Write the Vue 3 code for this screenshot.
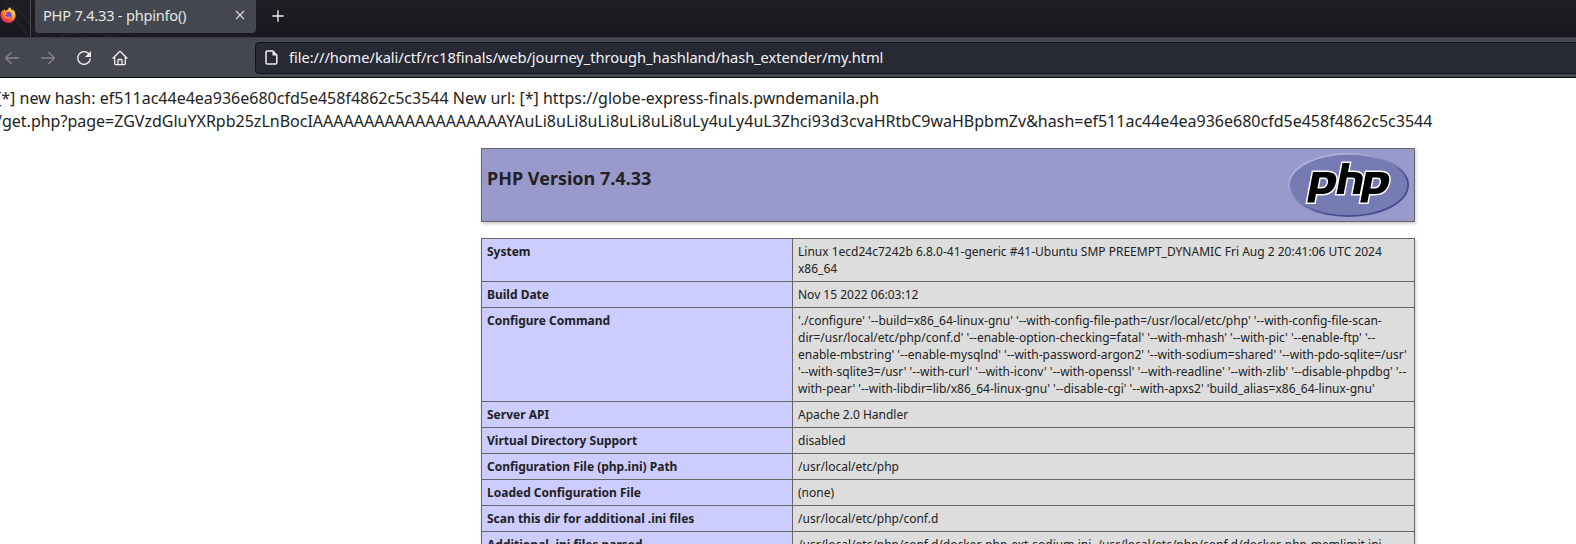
<script setup>
const rows = [
  { name: 'System', lines: ['Linux 1ecd24c7242b 6.8.0-41-generic #41-Ubuntu SMP PREEMPT_DYNAMIC Fri Aug 2 20:41:06 UTC 2024', 'x86_64'] },
  { name: 'Build Date', lines: ['Nov 15 2022 06:03:12'] },
  {
    name: 'Configure Command',
    lines: [
      "'./configure' '--build=x86_64-linux-gnu' '--with-config-file-path=/usr/local/etc/php' '--with-config-file-scan-",
      "dir=/usr/local/etc/php/conf.d' '--enable-option-checking=fatal' '--with-mhash' '--with-pic' '--enable-ftp' '--",
      "enable-mbstring' '--enable-mysqlnd' '--with-password-argon2' '--with-sodium=shared' '--with-pdo-sqlite=/usr'",
      "'--with-sqlite3=/usr' '--with-curl' '--with-iconv' '--with-openssl' '--with-readline' '--with-zlib' '--disable-phpdbg' '--",
      "with-pear' '--with-libdir=lib/x86_64-linux-gnu' '--disable-cgi' '--with-apxs2' 'build_alias=x86_64-linux-gnu'",
    ],
  },
  { name: 'Server API', lines: ['Apache 2.0 Handler'] },
  { name: 'Virtual Directory Support', lines: ['disabled'] },
  { name: 'Configuration File (php.ini) Path', lines: ['/usr/local/etc/php'] },
  { name: 'Loaded Configuration File', lines: ['(none)'] },
  { name: 'Scan this dir for additional .ini files', lines: ['/usr/local/etc/php/conf.d'] },
  { name: 'Additional .ini files parsed', lines: ['/usr/local/etc/php/conf.d/docker-php-ext-sodium.ini, /usr/local/etc/php/conf.d/docker-php-memlimit.ini'] },
]
</script>

<template>
  <div class="window">
    <div class="tabs">
      <div class="pinned">
        <svg width="16" height="16" viewBox="0 0 16 16">
          <defs>
            <linearGradient id="fox" x1="0.85" y1="0" x2="0.2" y2="1">
              <stop offset="0" stop-color="#fff04a" />
              <stop offset="0.4" stop-color="#ffa52b" />
              <stop offset="0.7" stop-color="#ff4a3c" />
              <stop offset="1" stop-color="#e8128a" />
            </linearGradient>
          </defs>
          <path fill="url(#fox)" d="M9.2 0.2c1.8 1 2.4 2.2 2.7 3.2l1-1c1.6 1.5 2.7 3.6 2.7 6a7.5 7.5 0 0 1-15.1.1C.5 6.300 1.200 4.300 2.600 2.900l.5 1.300L4.500 2l.8 1.700c1.100-.2 2-.6 2.600-1.400.5-.6.9-1.300 1.300-2.100z" />
          <circle cx="8.300" cy="8.100" r="3.300" fill="#7542e5" />
          <path fill="#ff9a2b" d="M3.800 5.600c1.500-.6 2.800-.2 4 .8-.8.7-2.100.6-2.400 1.600-.2 1 .6 1.600 1.700 1.800 1.500.2 2.300-.5 3.200-.3-.6 1.700-2.200 2.500-3.900 2.100C4.200 11.100 3.200 9 3.800 5.600z" />
        </svg>
      </div>
      <svg class="dragon" width="190" height="37" viewBox="0 0 190 37">
        <path fill="none" stroke="#25272e" stroke-width="3" d="M0 12C12 14 20 22 28 36M4 2C20 8 30 20 36 36M36 34C70 20 110 25 135 36M60 36C82 29 99 31 112 37" />
      </svg>
      <div class="tab">
        <span class="title">PHP 7.4.33 - phpinfo()</span>
        <svg class="close" width="10" height="10" viewBox="0 0 10 10"><path d="M1 1l8 8M9 1L1 9" /></svg>
      </div>
      <svg class="plus" width="12" height="12" viewBox="0 0 12 12"><path d="M6 0.300v11.400M.3 6h11.400" /></svg>
    </div>
    <div class="toolbar">
      <svg class="icon dim" width="16" height="16" viewBox="0 0 16 16"><path d="M14.500 8H1.500M7.200 2.500L1.500 8l5.700 5.500" /></svg>
      <svg class="icon dim" width="16" height="16" viewBox="0 0 16 16"><path d="M1.500 8h13M8.800 2.500L14.500 8l-5.700 5.500" /></svg>
      <svg class="icon" width="16" height="16" viewBox="0 0 16 16">
        <path d="M12.800 3.800A6.300 6.300 0 1 0 14.300 8.800" />
        <path class="fill" d="M15 1v6H9z" />
      </svg>
      <svg class="icon home" width="16" height="16" viewBox="0 0 16 16">
        <path d="M1 8.200L7.300 1.700a1 1 0 0 1 1.400 0L15 8.200M2.700 7v6.600a1 1 0 0 0 1 1h8.600a1 1 0 0 0 1-1V7M6 14.500v-4a1 1 0 0 1 1-1h2a1 1 0 0 1 1 1v4" />
      </svg>
      <div class="urlbar">
        <svg width="13" height="15" viewBox="0 0 13 15">
          <path class="page" d="M2.300 1h5.500l4 4v7.700a1.300 1.300 0 0 1-1.300 1.300H2.300A1.300 1.300 0 0 1 1 12.700V2.300A1.300 1.300 0 0 1 2.300 1z" />
          <path class="fold" d="M7.500 1l4.300 4.500H7.500z" />
        </svg>
        <span>file:///home/kali/ctf/rc18finals/web/journey_through_hashland/hash_extender/my.html</span>
      </div>
    </div>
    <main>
      <p class="first">[*] new hash: ef511ac44e4ea936e680cfd5e458f4862c5c3544 New url: [*] https://globe-express-finals.pwndemanila.ph</p>
      <p class="second">/get.php?page=ZGVzdGluYXRpb25zLnBocIAAAAAAAAAAAAAAAAAAAYAuLi8uLi8uLi8uLi8uLi8uLy4uLy4uL3Zhci93d3cvaHRtbC9waHBpbmZv&amp;hash=ef511ac44e4ea936e680cfd5e458f4862c5c3544</p>
      <header>
        <h1>PHP Version 7.4.33</h1>
        <svg class="logo" width="122" height="65" viewBox="0 0 122 65">
          <defs>
            <linearGradient id="rim" x1="0.1" y1="0.1" x2="0.8" y2="0.9">
              <stop offset="0" stop-color="#b5b8df" />
              <stop offset="0.3" stop-color="#a3a5d2" />
              <stop offset="0.52" stop-color="#777bb3" />
              <stop offset="0.75" stop-color="#484892" />
            </linearGradient>
          </defs>
          <ellipse cx="60.500" cy="32" rx="60.500" ry="32" fill="url(#rim)" />
          <ellipse cx="60.500" cy="32" rx="58.800" ry="30.200" fill="#777bb3" />
          <g class="mark">
            <path d="M25 19h14q11 0 9 10q-2.500 12-14 12h-6l-1.600 8.500h-7.200zM31.500 24.500l-2.100 11h3.500q6 0 7-5.500q1-5.500-4-5.500z" />
            <path d="M78 19h14q11 0 9 10q-2.500 12-14 12h-6l-1.600 8.500h-7.200zM84.500 24.500l-2.100 11h3.500q6 0 7-5.500q1-5.500-4-5.500z" />
            <path d="M54.500 10h7.200l-1.700 9h6q10 0 8.500 8l-2.700 14h-7.200l2.500-13q.8-3.500-3-3.500h-5.300L55.700 41h-7.200z" />
          </g>
        </svg>
      </header>
      <table>
        <tbody>
          <tr v-for="row in rows" :key="row.name">
            <td class="e">{{ row.name }}</td>
            <td class="v"><div v-for="line in row.lines" :key="line">{{ line }}</div></td>
          </tr>
        </tbody>
      </table>
    </main>
  </div>
</template>

<style>
html, body { margin: 0; background: #fff; overflow: hidden; }
</style>

<style scoped>
.window {
  width: 1576px;
  height: 544px;
  overflow: hidden;
  background: #fff;
  color: #222;
  font-family: "Noto Sans", sans-serif;
}
.tabs {
  position: relative;
  display: flex;
  height: 37px;
  background: linear-gradient(#1d1f23, #18191f);
}
.pinned {
  box-sizing: border-box;
  width: 31px;
  height: 37px;
  border-right: 1px solid #4b4c51;
  padding-top: 7px;
}
.pinned svg { display: block; }
.dragon { position: absolute; left: 0; top: 0; z-index: 0; opacity: 0.6; }
.pinned, .tab, .plus { z-index: 1; position: relative; }
.tab {
  box-sizing: border-box;
  display: flex;
  align-items: center;
  justify-content: space-between;
  width: 221px;
  height: 33px;
  margin-left: 4px;
  padding: 0 11px 3px 8px;
  border-radius: 0 0 4px 4px;
  background: #44474e;
  color: #e6e6e8;
  font-size: 14.670px;
}
.title { white-space: nowrap; letter-spacing: -0.25px; }
.close { fill: none; stroke: #dcdcde; stroke-width: 1.100; }
.plus { margin: 10px 0 0 16px; fill: none; stroke: #eee; stroke-width: 1.400; }
.toolbar {
  box-sizing: border-box;
  display: flex;
  align-items: center;
  height: 41px;
  padding-left: 4px;
  border-top: 1px solid #393b42;
  border-bottom: 1px solid #0c0c0d;
  background: #44474e;
}
.icon { flex: none; margin-right: 20px; fill: none; stroke: #f0f0f1; stroke-width: 1.300; stroke-linecap: round; stroke-linejoin: round; }
.icon.home { margin-left: -0.5px; margin-right: 20.5px; }
.icon.dim { stroke: #85878b; }
.icon .fill { fill: #f0f0f1; stroke: none; }
.urlbar {
  box-sizing: border-box;
  display: flex;
  align-items: center;
  flex: none;
  width: 1340px;
  height: 32px;
  margin-left: 107px;
  padding: 0 0 1px 9px;
  border: 1px solid #111217;
  border-radius: 4px;
  background: #272935;
  color: #f5f5f6;
  font-size: 14.670px;
  letter-spacing: -0.046px;
  white-space: nowrap;
}
.urlbar svg { margin-right: 11px; }
.urlbar span { line-height: 20px; padding-bottom: 1px; }
.page { fill: none; stroke: #f0f0f1; stroke-width: 1.500; }
.fold { fill: #f0f0f1; }
main { padding-top: 9px; }
p { margin: 0; font-size: 16px; line-height: 23px; white-space: nowrap; }
.first { margin-left: -4px; }
.second { margin-left: -4px; }
header {
  box-sizing: border-box;
  display: flex;
  justify-content: space-between;
  width: 934px;
  height: 74px;
  margin: 15px 0 16px 481px;
  padding: 4px 4px 0 5px;
  border: 1px solid #666;
  background: #99c;
  box-shadow: 1px 2px 3px #ccc;
}
h1 { margin: 13px 0 0; font-size: 18px; line-height: 25px; }
.logo { flex: none; }
.mark path { fill: #000; fill-rule: evenodd; stroke: #fff; stroke-width: 3; paint-order: stroke; }
table {
  width: 934px;
  margin-left: 481px;
  border-collapse: collapse;
  table-layout: fixed;
  box-shadow: 1px 2px 3px #ccc;
}
td {
  padding: 4px 5px;
  border: 1px solid #666;
  vertical-align: baseline;
  font-size: 12px;
  line-height: 17px;
  white-space: nowrap;
}
.e { width: 300px; background: #ccf; font-weight: bold; }
.v { background: #ddd; }
</style>
